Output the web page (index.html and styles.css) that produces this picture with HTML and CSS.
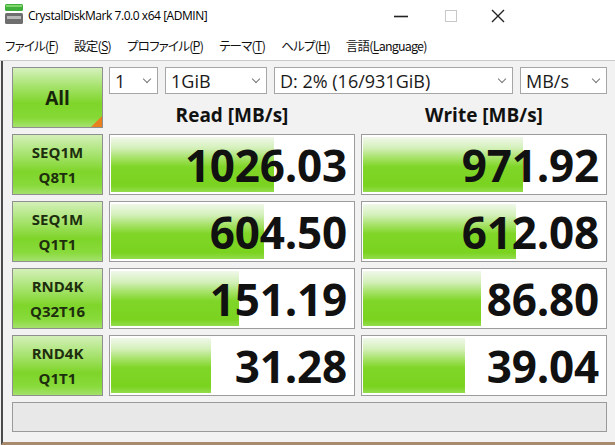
FILE: index.html
```html
<!DOCTYPE html>
<html lang="ja">
<head>
    <meta charset="UTF-8">
    <meta name="viewport" content="width=device-width, initial-scale=1.0">
    <title>CrystalDiskMark 7.0.0 x64 [ADMIN]</title>
    <link rel="stylesheet" href="styles.css">
</head>
<body>

    <header class="titlebar">
        <svg class="app-icon" width="18" height="21" viewBox="0 0 18 21">
            <rect x="0" y="0" width="18" height="7" rx="1.5" fill="#3fae3a"/>
            <rect x="1" y="1" width="16" height="2" fill="#7fd66d"/>
            <rect x="0" y="9" width="18" height="11" rx="1.5" fill="#6e6e6e"/>
            <rect x="2" y="12" width="14" height="3" fill="#b9b9b9"/>
        </svg>
        <span class="title">CrystalDiskMark 7.0.0 x64 [ADMIN]</span>
        <div class="win-controls">
            <svg width="16" height="16" viewBox="0 0 16 16"><line x1="1" y1="8.5" x2="15" y2="8.5" stroke="#222" stroke-width="1.6"/></svg>
            <svg width="16" height="16" viewBox="0 0 16 16"><rect x="2.5" y="2.5" width="11" height="11" fill="none" stroke="#c8c8c8" stroke-width="1"/></svg>
            <svg width="16" height="16" viewBox="0 0 16 16"><path d="M2 2 L14 14 M14 2 L2 14" stroke="#222" stroke-width="1.4"/></svg>
        </div>
    </header>

    <nav class="menubar">
        <span>ファイル(<u>F</u>)</span>
        <span>設定(<u>S</u>)</span>
        <span>プロファイル(<u>P</u>)</span>
        <span>テーマ(<u>T</u>)</span>
        <span>ヘルプ(<u>H</u>)</span>
        <span>言語(<u>L</u>anguage)</span>
    </nav>

    <main class="bench">
        <div class="btn-all">All</div>

        <div class="top-controls">
            <div class="selects">
                <div class="select sel-count"><span>1</span><i class="chev"></i></div>
                <div class="select sel-size"><span>1GiB</span><i class="chev"></i></div>
                <div class="select sel-drive"><span>D: 2% (16/931GiB)</span><i class="chev"></i></div>
                <div class="select sel-unit"><span>MB/s</span><i class="chev"></i></div>
            </div>
            <div class="heads">
                <span>Read [MB/s]</span>
                <span>Write [MB/s]</span>
            </div>
        </div>

        <div class="test-label">SEQ1M<br>Q8T1</div>
        <div class="meter" style="--p: 66.8%">1026.03</div>
        <div class="meter" style="--p: 65.6%">971.92</div>

        <div class="test-label">SEQ1M<br>Q1T1</div>
        <div class="meter" style="--p: 62.7%">604.50</div>
        <div class="meter" style="--p: 62.7%">612.08</div>

        <div class="test-label">RND4K<br>Q32T16</div>
        <div class="meter" style="--p: 52.5%">151.19</div>
        <div class="meter" style="--p: 48.4%">86.80</div>

        <div class="test-label">RND4K<br>Q1T1</div>
        <div class="meter" style="--p: 41%">31.28</div>
        <div class="meter" style="--p: 41.8%">39.04</div>

        <div class="status"></div>
    </main>

</body>
</html>
```

FILE: styles.css
```css
body{
    margin: 0;
    width: 615px;
    height: 445px;
    overflow: hidden;
    background: #f2f2f2;
    font-family: "Open Sans", "Noto Sans CJK JP", sans-serif;
    color: #111;
}

.titlebar{
    height: 31px;
    background: #fff;
    display: flex;
    align-items: center;
    padding-left: 5px;
    box-sizing: border-box;
}
.app-icon{
    margin-top: -2px;
}
.title{
    margin-left: 5px;
    font-size: 12px;
    letter-spacing: -0.45px;
    color: #000;
}
.win-controls{
    margin-left: auto;
    display: flex;
    gap: 34px;
    padding-right: 109px;
}
.win-controls svg{
    display: block;
}
.win-controls svg:last-child{
    margin-left: -3px;
}

.menubar{
    height: 29px;
    background: #fff;
    display: flex;
    align-items: center;
    gap: 16px;
    padding-left: 5px;
    font-family: "Noto Sans CJK JP", sans-serif;
    font-feature-settings: "palt";
    font-size: 12.5px;
    letter-spacing: -0.8px;
    color: #111;
    border-bottom: 1px solid #c9c9c9;
}
.menubar u{
    text-decoration-thickness: 1px;
    text-underline-offset: 2px;
}

.bench{
    height: 384px;
    border-left: 2px solid #4b4b4b;
    border-bottom: 3px solid #a88b6c;
    margin-left: 1px;
    padding: 6px 0 0 9px;
    box-sizing: border-box;
    display: grid;
    grid-template-columns: 91px 246px 246px;
    grid-template-rows: repeat(5, 61px) 30px;
    gap: 6px;
}

.btn-all{
    position: relative;
    display: flex;
    align-items: center;
    justify-content: center;
    font-weight: 700;
    font-size: 19px;
    color: #17260a;
    border: 1px solid #8f8f8f;
    background: linear-gradient(to bottom, #d6f1bd 0%, #a7e36e 30%, #7fd52a 60%, #86d936 85%, #a6e26e 100%);
}
.btn-all::after{
    content: "";
    position: absolute;
    right: 0;
    bottom: 0;
    border-left: 11px solid transparent;
    border-bottom: 11px solid #e8801e;
}

.top-controls{
    grid-column: 2 / 4;
    display: flex;
    flex-direction: column;
}
.selects{
    display: flex;
    gap: 7px;
    height: 33px;
}
.select{
    background: #fff;
    border: 1px solid #a6a6a6;
    box-sizing: border-box;
    display: flex;
    align-items: center;
    justify-content: space-between;
    padding: 0 7px 0 5px;
    font-size: 18px;
    color: #1a1a1a;
}
.sel-count{ width: 49px; }
.sel-size{ width: 102px; }
.sel-drive{ width: 239px; }
.sel-unit{ width: 87px; }
.chev{
    width: 5px;
    height: 5px;
    border-right: 1px solid #777;
    border-bottom: 1px solid #777;
    transform: rotate(45deg);
    margin-top: -4px;
}
.heads{
    flex: 1;
    display: grid;
    grid-template-columns: 246px 246px;
    gap: 6px;
    align-items: center;
    text-align: center;
    font-weight: 700;
    font-size: 19px;
    color: #111;
    padding-top: 8px;
}

.test-label{
    display: flex;
    align-items: center;
    justify-content: center;
    text-align: center;
    font-weight: 700;
    font-size: 15px;
    line-height: 25px;
    color: #1d2e0e;
    border: 1px solid #8f8f8f;
    background: linear-gradient(to bottom, #d3f0b8 0%, #a4e26a 35%, #7fd52a 62%, #88da3a 85%, #a4e16c 100%);
}

.meter{
    display: flex;
    align-items: center;
    justify-content: flex-end;
    padding-right: 7px;
    font-weight: 700;
    font-size: 44px;
    letter-spacing: -0.2px;
    color: #111;
    border: 1px solid #9c9c9c;
    background-color: #fff;
    background-image: linear-gradient(to bottom, #f0f8ea 0%, #d4f0ba 20%, #a6e268 38%, #80d628 54%, #7ad31f 88%, #93dc4c 100%);
    background-size: var(--p) calc(100% - 4px);
    background-position: 1px 2px;
    background-repeat: no-repeat;
}

.status{
    grid-column: 1 / 4;
    border: 1px solid #9a9a9a;
    background: #e8e8e8;
}
```
